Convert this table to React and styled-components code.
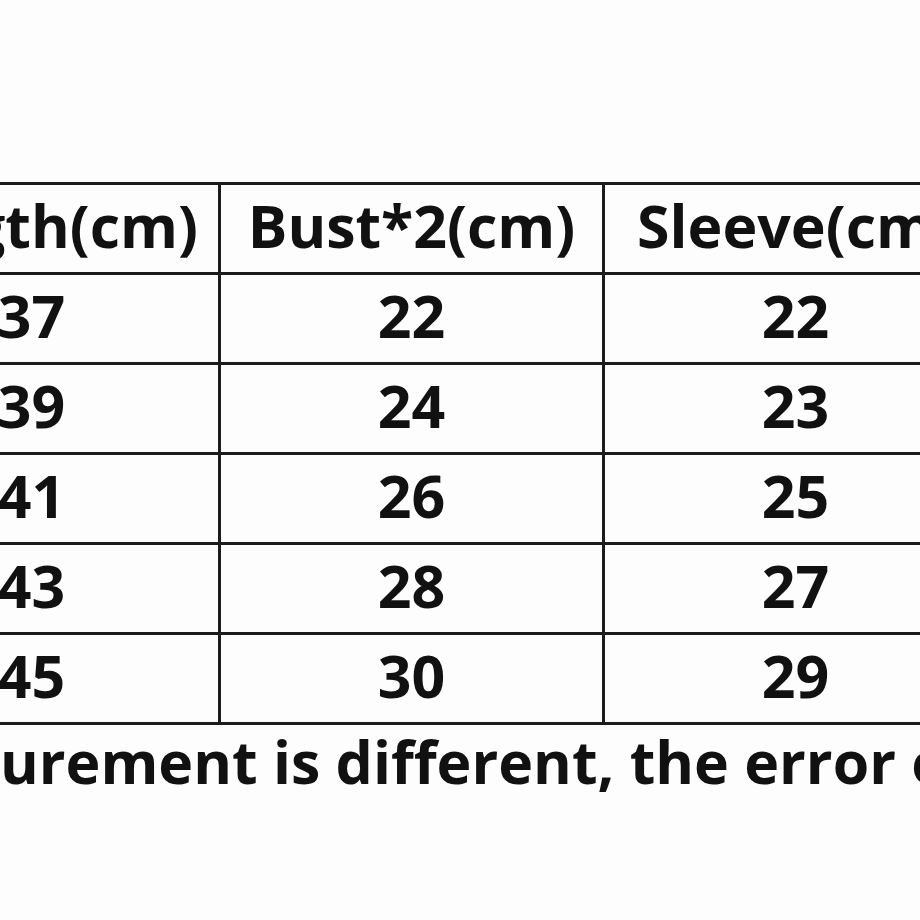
import styled, { createGlobalStyle } from "styled-components";

const GlobalStyle = createGlobalStyle`
  html, body {
    margin: 0;
    padding: 0;
    background: #fdfdfd;
  }
  body {
    font-family: "Open Sans", "Noto Sans", sans-serif;
    color: #111;
  }
`

const Page = styled.div`
  width: 920px;
  height: 920px;
  overflow: hidden;
  padding-top: 182px;
  box-sizing: border-box;
`

const Table = styled.table`
  border-collapse: collapse;
  margin-left: -158px;
  table-layout: fixed;
  width: 1144px;
`

const Col = styled.col`
  width: ${props => props.w}px;
`

const Cell = styled.td`
  border: 3px solid #1c1c1c;
  height: 90px;
  padding: 0 0 6px 0;
  box-sizing: border-box;
  text-align: center;
  vertical-align: middle;
  font-weight: 700;
  font-size: 59px;
  line-height: 1;
  white-space: nowrap;
`

const Note = styled.p`
  margin: 4px 0 0 0;
  font-weight: 700;
  font-size: 59px;
  line-height: 1.1;
  white-space: nowrap;
`

const header = ["Length(cm)", "Bust*2(cm)", "Sleeve(cm)"]
const rows = [
  ["37", "22", "22"],
  ["39", "24", "23"],
  ["41", "26", "25"],
  ["43", "28", "27"],
  ["45", "30", "29"],
]

const App = () => {
  return (
    <Page>
      <GlobalStyle />
      <Table>
        <colgroup>
          <Col w={376} />
          <Col w={384} />
          <Col w={384} />
        </colgroup>
        <tbody>
          <tr>
            {header.map((h) => <Cell key={h}>{h}</Cell>)}
          </tr>
          {rows.map((r, i) => (
            <tr key={i}>
              {r.map((v, j) => <Cell key={j}>{v}</Cell>)}
            </tr>
          ))}
        </tbody>
      </Table>
      <Note>urement is different, the error of 1-3cm is normal</Note>
    </Page>
  );
};

export default App;
